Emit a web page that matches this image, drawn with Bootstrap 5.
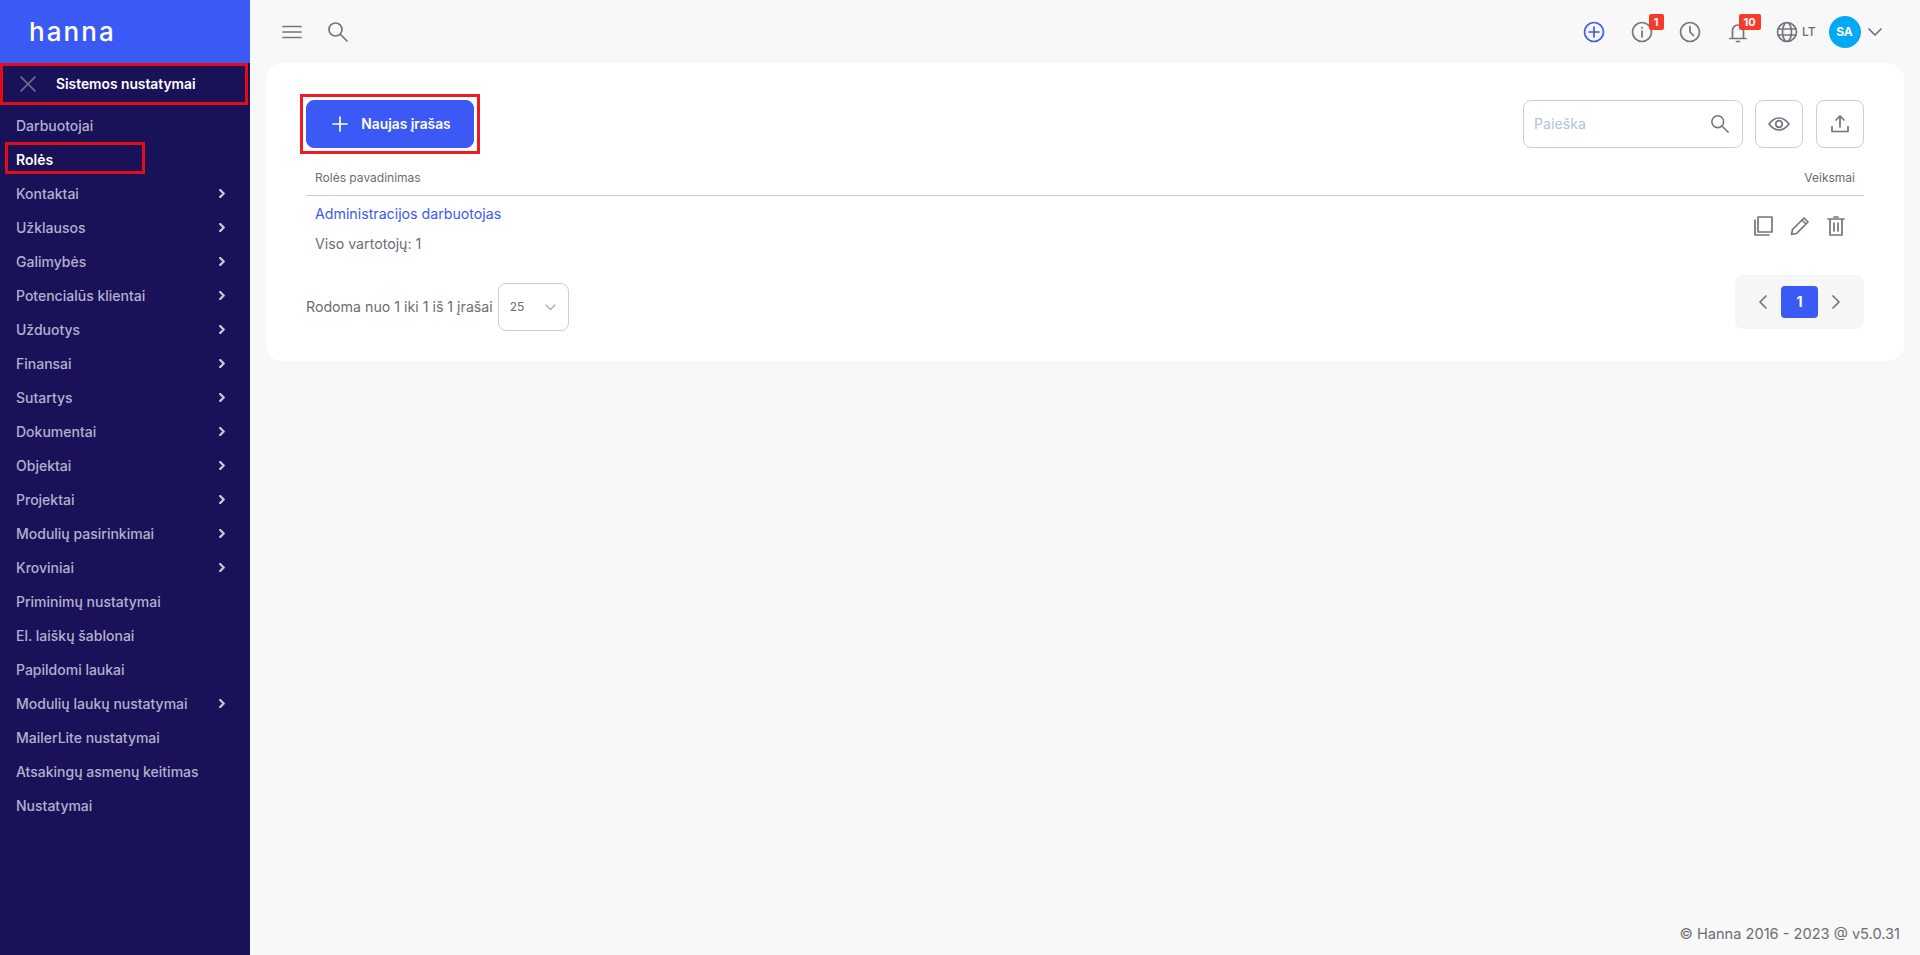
<!DOCTYPE html>
<html lang="lt">
<head>
<meta charset="utf-8">
<title>Rolės</title>
<link href="https://cdn.jsdelivr.net/npm/bootstrap@5.3.0/dist/css/bootstrap.min.css" rel="stylesheet">
<style>
html,body{height:100%;overflow:hidden}
body{font-family:Inter,"Liberation Sans",sans-serif;background:#f8f8f8;color:#6c6d75;font-size:14px}
svg{display:block;fill:none;stroke:#70757e;stroke-width:1.7;stroke-linecap:round;stroke-linejoin:round}
.hn-shell{height:955px}
.hn-side{width:250px;flex:none;background:#1a1259;height:100%}
.hn-logo{height:63px;background:#3b5af5;padding-left:29px;color:#fff;font-size:26px;font-weight:500;letter-spacing:2.1px;line-height:63px}
.hn-head{height:42px;width:248px;border:3px solid #e30d16;color:#fff;font-weight:600;padding-left:17px;font-size:13.8px;gap:20px}
.hn-head svg{stroke:#6f6f87}
.hn-menu{padding-top:3.5px}
.hn-item{height:34px;padding:0 25px 0 16px;color:#b3b0cd;font-weight:500;font-size:14px;text-decoration:none}
.hn-item svg{stroke:#c9c7dc;stroke-width:2.4}
.hn-active{color:#fff;font-weight:600;position:relative}
.hn-active::after{content:"";position:absolute;left:5px;top:-.5px;width:140px;height:32px;border:3px solid #e30d16}
.hn-main{min-width:0;height:100%}
.hn-top{height:63px;padding:0 38px 0 32px;flex:none}
.hn-card{background:#fff;border-radius:16px;margin:0 16px;padding:31px 40px 31px 34px;height:298px;flex:none;font-size:14.2px}
.hn-new-wrap{border:3px solid #ed1c24;padding:3px;width:180px;height:60px}
.hn-new{background:#3b5af5;border-color:#3b5af5;border-radius:8px;width:100%;height:100%;font-size:13.8px;font-weight:600;gap:13px;padding:0 0 0 3px}
.hn-new svg{stroke:#fff}
.hn-field{width:220px;height:48px;border:1px solid #cfcfcf;border-radius:8px;padding:0 12px 0 10px;color:#b4c4d6;font-size:14.2px}
.hn-sq{width:48px;height:48px;border:1px solid #cfcfcf;border-radius:8px;background:#fff;padding:0}
.hn-th{height:36px;border-bottom:1px solid #cdcdcd;font-size:12px;font-weight:400;padding:0 9px;margin-left:6px;margin-top:6px;color:#6c6d75}
.hn-tr{padding:8px 9px 0;margin-left:6px;height:70px}
.hn-link{color:#3b5af5;text-decoration:none;line-height:20px}
.hn-sub{margin-top:10px;line-height:20px}
.hn-acts{gap:17px;padding-top:12px;margin-right:10px}
.hn-foot{margin-top:13px;margin-left:6px}
.hn-left{margin-top:4px}
.hn-sel{width:71px;height:48px;border:1px solid #cfcfcf;border-radius:8px;padding:0 12px 0 11px;font-size:12px;margin-left:5px}
.hn-sel svg{stroke:#a5a8ae;stroke-width:1.2}
.hn-pager{width:129px;height:54px;background:#f6f6f7;border-radius:8px;margin-top:-4px;padding:0 24px}
.hn-pnum{width:37px;height:32px;border-radius:4px;background:#3b5af5;color:#fff;font-weight:700;font-size:14px;line-height:32px;text-align:center}
.hn-badge{position:absolute;background:#f63b2d;color:#fff;font-size:11px;font-weight:700;line-height:16px;height:16px;border-radius:2px;text-align:center}
.hn-ic{position:relative;margin-left:26px}
.hn-badge-a{left:18px;top:-7px;width:15px}
.hn-badge-b{left:12px;top:-7px;width:22px}
.hn-plus{stroke:#3b5af5}
.hn-globe{margin-left:27px;gap:4.5px}
.hn-lt{font-size:12px;font-weight:500}
.hn-av{width:32px;height:32px;border-radius:50%;background:#04a9f5;color:#fff;font-size:12px;font-weight:700;line-height:32px;text-align:center;margin-left:13px}
.hn-caret{margin-left:7.5px}
.hn-copy{padding:0 2px 0 0;font-size:14.6px;color:#6c6d75;height:40px;margin-right:18px}
.hn-tgap{gap:25px}
.hn-rgap{gap:12px}
.hn-up{margin-left:1px}
</style>
</head>
<body>
<div class="d-flex hn-shell">
  <aside class="hn-side d-flex flex-column">
    <div class="hn-logo">hanna</div>
    <div class="hn-head d-flex align-items-center">
      <svg width="16" height="16" viewBox="0 0 16 16"><path d="M1 1l14 14M15 1L1 15"/></svg>
      <span>Sistemos nustatymai</span>
    </div>
    <nav class="hn-menu d-flex flex-column">
      <a class="hn-item d-flex align-items-center justify-content-between" href="#">Darbuotojai</a>
      <a class="hn-item hn-active d-flex align-items-center justify-content-between" href="#">Rolės</a>
      <a class="hn-item d-flex align-items-center justify-content-between" href="#">Kontaktai<svg width="6" height="9" viewBox="0 0 6 9"><path d="M1.200 1l3.500 3.500-3.500 3.500"/></svg></a>
      <a class="hn-item d-flex align-items-center justify-content-between" href="#">Užklausos<svg width="6" height="9" viewBox="0 0 6 9"><path d="M1.200 1l3.500 3.500-3.500 3.500"/></svg></a>
      <a class="hn-item d-flex align-items-center justify-content-between" href="#">Galimybės<svg width="6" height="9" viewBox="0 0 6 9"><path d="M1.200 1l3.500 3.500-3.500 3.500"/></svg></a>
      <a class="hn-item d-flex align-items-center justify-content-between" href="#">Potencialūs klientai<svg width="6" height="9" viewBox="0 0 6 9"><path d="M1.200 1l3.500 3.500-3.500 3.500"/></svg></a>
      <a class="hn-item d-flex align-items-center justify-content-between" href="#">Užduotys<svg width="6" height="9" viewBox="0 0 6 9"><path d="M1.200 1l3.500 3.500-3.500 3.500"/></svg></a>
      <a class="hn-item d-flex align-items-center justify-content-between" href="#">Finansai<svg width="6" height="9" viewBox="0 0 6 9"><path d="M1.200 1l3.500 3.500-3.500 3.500"/></svg></a>
      <a class="hn-item d-flex align-items-center justify-content-between" href="#">Sutartys<svg width="6" height="9" viewBox="0 0 6 9"><path d="M1.200 1l3.500 3.500-3.500 3.500"/></svg></a>
      <a class="hn-item d-flex align-items-center justify-content-between" href="#">Dokumentai<svg width="6" height="9" viewBox="0 0 6 9"><path d="M1.200 1l3.500 3.500-3.500 3.500"/></svg></a>
      <a class="hn-item d-flex align-items-center justify-content-between" href="#">Objektai<svg width="6" height="9" viewBox="0 0 6 9"><path d="M1.200 1l3.500 3.500-3.500 3.500"/></svg></a>
      <a class="hn-item d-flex align-items-center justify-content-between" href="#">Projektai<svg width="6" height="9" viewBox="0 0 6 9"><path d="M1.200 1l3.500 3.500-3.500 3.500"/></svg></a>
      <a class="hn-item d-flex align-items-center justify-content-between" href="#">Modulių pasirinkimai<svg width="6" height="9" viewBox="0 0 6 9"><path d="M1.200 1l3.500 3.500-3.500 3.500"/></svg></a>
      <a class="hn-item d-flex align-items-center justify-content-between" href="#">Kroviniai<svg width="6" height="9" viewBox="0 0 6 9"><path d="M1.200 1l3.500 3.500-3.500 3.500"/></svg></a>
      <a class="hn-item d-flex align-items-center justify-content-between" href="#">Priminimų nustatymai</a>
      <a class="hn-item d-flex align-items-center justify-content-between" href="#">El. laiškų šablonai</a>
      <a class="hn-item d-flex align-items-center justify-content-between" href="#">Papildomi laukai</a>
      <a class="hn-item d-flex align-items-center justify-content-between" href="#">Modulių laukų nustatymai<svg width="6" height="9" viewBox="0 0 6 9"><path d="M1.200 1l3.500 3.500-3.500 3.500"/></svg></a>
      <a class="hn-item d-flex align-items-center justify-content-between" href="#">MailerLite nustatymai</a>
      <a class="hn-item d-flex align-items-center justify-content-between" href="#">Atsakingų asmenų keitimas</a>
      <a class="hn-item d-flex align-items-center justify-content-between" href="#">Nustatymai</a>
    </nav>
  </aside>
  <main class="hn-main flex-grow-1 d-flex flex-column">
    <header class="hn-top d-flex align-items-center justify-content-between">
      <div class="d-flex align-items-center hn-tgap">
        <svg width="20" height="14" viewBox="0 0 20 14"><path d="M1 1.500h18M1 7h18M1 12.500h18"/></svg>
        <svg width="22" height="22" viewBox="0 0 22 22"><circle cx="8.500" cy="8.500" r="6.500"/><path d="M13.500 13.500L20 20"/></svg>
      </div>
      <div class="d-flex align-items-center">
        <svg class="hn-plus" width="22" height="22" viewBox="0 0 22 22"><circle cx="11" cy="11" r="9.500"/><path d="M11 6v10M6 11h10"/></svg>
        <div class="hn-ic"><svg width="22" height="22" viewBox="0 0 22 22"><circle cx="11" cy="11" r="9.500"/><path d="M11 10v6M11 6.500v.5"/></svg><span class="hn-badge hn-badge-a">1</span></div>
        <div class="hn-ic"><svg width="22" height="22" viewBox="0 0 22 22"><circle cx="11" cy="11" r="9.500"/><path d="M11 5.500V11l3.500 3.500"/></svg></div>
        <div class="hn-ic"><svg width="22" height="22" viewBox="0 0 22 22"><path d="M3 17.500h16M5.500 17.500V9.500a5.500 5.500 0 0 1 11 0v8M9.500 20.500h3"/></svg><span class="hn-badge hn-badge-b">10</span></div>
        <div class="d-flex align-items-center hn-globe"><svg width="22" height="22" viewBox="0 0 22 22"><circle cx="11" cy="11" r="9.500"/><ellipse cx="11" cy="11" rx="4.500" ry="9.500"/><path d="M2 8h18M2 14h18"/></svg><span class="hn-lt">LT</span></div>
        <div class="hn-av">SA</div>
        <svg class="hn-caret" width="14" height="8" viewBox="0 0 14 8"><path d="M1 1l6 6 6-6"/></svg>
      </div>
    </header>
    <section class="hn-card">
      <div class="d-flex justify-content-between align-items-center">
        <div class="hn-new-wrap"><button class="btn btn-primary hn-new d-flex align-items-center justify-content-center"><svg width="16" height="16" viewBox="0 0 16 16"><path d="M8 1v14M1 8h14"/></svg>Naujas įrašas</button></div>
        <div class="d-flex align-items-center hn-rgap">
          <div class="hn-field d-flex align-items-center justify-content-between"><span>Paieška</span><svg width="20" height="20" viewBox="0 0 22 22"><circle cx="8.500" cy="8.500" r="6.500"/><path d="M13.500 13.500L20 20"/></svg></div>
          <button class="hn-sq d-flex align-items-center justify-content-center"><svg width="22" height="14" viewBox="0 0 22 14"><path d="M1 7c3-4 6.500-6 10-6s7 2 10 6c-3 4-6.500 6-10 6S4 11 1 7z"/><circle cx="11" cy="7" r="3.300"/></svg></button>
          <button class="hn-sq hn-up d-flex align-items-center justify-content-center"><svg width="18" height="18" viewBox="0 0 18 18"><path d="M9 12V1.500M5 5l4-4 4 4M1 11.500V16.500h16V11.500"/></svg></button>
        </div>
      </div>
      <div class="hn-th d-flex align-items-center justify-content-between"><span>Rolės pavadinimas</span><span>Veiksmai</span></div>
      <div class="hn-tr d-flex justify-content-between">
        <div><a class="hn-link d-block" href="#">Administracijos darbuotojas</a><div class="hn-sub">Viso vartotojų: 1</div></div>
        <div class="d-flex align-items-start hn-acts">
          <svg width="19" height="20" viewBox="0 0 19 20"><rect x="4" y="1" width="14" height="15"/><path d="M1 4v15h14"/></svg>
          <svg width="20" height="20" viewBox="0 0 20 20"><path d="M1.500 18.500l1-5L14 2l4 4L6.500 17.500zM12 4l4 4"/></svg>
          <svg width="18" height="20" viewBox="0 0 18 20"><path d="M1 3h16M3 3v16h12V3M7 1h4M7 7v8M11 7v8"/></svg>
        </div>
      </div>
      <div class="hn-foot d-flex justify-content-between align-items-start">
        <div class="d-flex align-items-center hn-left"><span>Rodoma nuo 1 iki 1 iš 1 įrašai</span><div class="hn-sel d-flex align-items-center justify-content-between"><span>25</span><svg width="11" height="7" viewBox="0 0 11 7"><path d="M1 1l4.500 4.500L10 1"/></svg></div></div>
        <div class="hn-pager d-flex align-items-center justify-content-between"><svg width="8" height="14" viewBox="0 0 8 14"><path d="M7 1L1 7l6 6"/></svg><div class="hn-pnum">1</div><svg width="8" height="14" viewBox="0 0 8 14"><path d="M1 1l6 6-6 6"/></svg></div>
      </div>
    </section>
    <footer class="mt-auto d-flex justify-content-end align-items-center hn-copy">© Hanna 2016 - 2023 @ v5.0.31</footer>
  </main>
</div>
<script src="https://cdn.jsdelivr.net/npm/bootstrap@5.3.0/dist/js/bootstrap.bundle.min.js"></script>
</body>
</html>
